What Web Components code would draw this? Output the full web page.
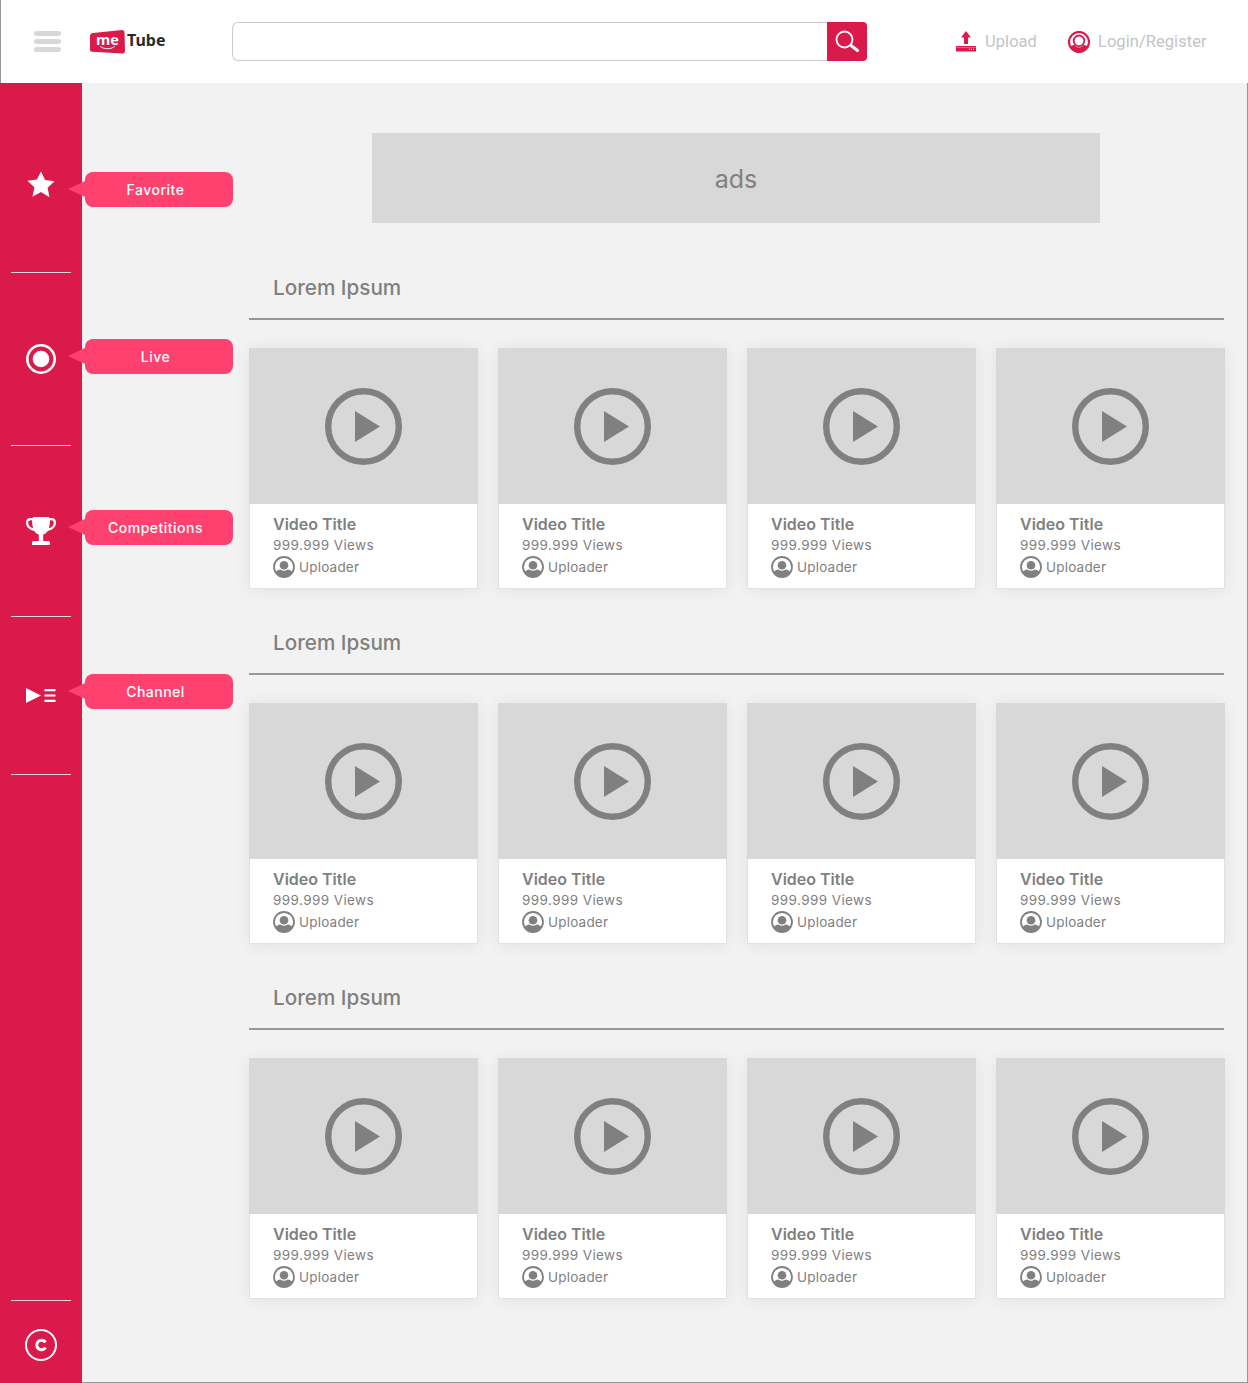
<!DOCTYPE html>
<html lang="en"><head><meta charset="utf-8"><title>meTube</title>
<style>html,body{margin:0;padding:0;background:#fff}body{font-family:Inter,"Liberation Sans",sans-serif}</style></head>
<body>
<me-app></me-app>
<script>
const def=(n,css,html)=>{customElements.define(n,class extends HTMLElement{
  connectedCallback(){ if(this.shadowRoot) return; const r=this.attachShadow({mode:'open'});
    const at=k=>this.getAttribute(k)||'';
    r.innerHTML=`<style>${css}</style>`+(typeof html==='function'?html(at):html); }
});};
const ICON={
 star:`<svg width="28" height="28" viewBox="0 0 28 28"><path fill="#fff" d="M14 .5l4.100 8.600 9.500 1.200-7 6.500 1.900 9.400L14 21l-8.500 4.700 1.900-9.400-7-6.500 9.500-1.200z"/></svg>`,
 live:`<svg width="30" height="30" viewBox="0 0 30 30"><circle cx="15" cy="15" r="13.700" fill="none" stroke="#fff" stroke-width="2.600"/><circle cx="15" cy="15" r="8.300" fill="#fff"/></svg>`,
 trophy:`<svg width="30" height="28" viewBox="0 0 30 28"><path fill="#fff" d="M7 0h16v1h2.500c3 0 4.500 2 4.500 4.800 0 4.200-3.500 7.400-8 8-1.200 2-3 3.300-4.800 3.800V24h5c1 0 1.800.6 1.800 1.600V28H6v-2.400c0-1 .8-1.600 1.800-1.600h5v-6.400c-1.800-.5-3.600-1.800-4.800-3.800-4.500-.6-8-3.800-8-8C0 3 1.500 1 4.500 1H7zM4.800 3.200C3 3.200 2.200 4.300 2.200 5.800c0 2.500 2 4.700 5 5.500C6.400 9 6 6 6.100 3.200zm20.400 0h-1.300c.1 2.800-.3 5.800-1.100 8.100 3-.8 5-3 5-5.500 0-1.500-.8-2.600-2.600-2.600z"/></svg>`,
 channel:`<svg width="30" height="15" viewBox="0 0 30 15"><path fill="#fff" d="M0 0l15 7.500L0 15z"/><path fill="#fff" d="M18.500 1h11v2.200h-11zM18.500 6.400h11v2.200h-11zM18.500 11.800h11V14h-11z"/></svg>`,
 copy:`<svg width="32" height="32" viewBox="0 0 32 32"><circle cx="16" cy="16" r="15" fill="none" stroke="#fff" stroke-width="2"/><path fill="none" stroke="#fff" stroke-width="3" d="M20.500 13.300a4.800 4.800 0 1 0 0 5.400"/></svg>`,
 play:`<svg width="77" height="77" viewBox="0 0 77 77"><circle cx="38.500" cy="38.500" r="35.300" fill="none" stroke="#808080" stroke-width="6.400"/><path fill="#808080" d="M30 23l25 15.500L30 54z"/></svg>`,
 user:`<svg width="22" height="22" viewBox="0 0 22 22"><defs><clipPath id="c"><circle cx="11" cy="11" r="9.800"/></clipPath></defs><circle cx="11" cy="11" r="10" fill="none" stroke="#808080" stroke-width="1.800"/><circle cx="11" cy="9.300" r="4.300" fill="#808080"/><path clip-path="url(#c)" fill="#808080" d="M2 22v-4.500c1-3 3.500-4 5.500-4 1 .8 2.200 1.200 3.500 1.200s2.500-.4 3.500-1.200c2 0 4.500 1 5.500 4V22z"/></svg>`,
 login:`<svg width="22" height="22" viewBox="0 0 22 22"><defs><clipPath id="d"><circle cx="11" cy="11" r="9.500"/></clipPath></defs><circle cx="11" cy="11" r="10" fill="none" stroke="#db1a4c" stroke-width="2.200"/><circle cx="11" cy="9.800" r="5.300" fill="none" stroke="#db1a4c" stroke-width="1.800"/><path clip-path="url(#d)" fill="#db1a4c" d="M2 22v-6c1.500-1.500 3-2 4.500-2 1 1.600 2.700 2.400 4.500 2.400s3.500-.8 4.500-2.400c1.500 0 3 .5 4.500 2v6z"/></svg>`,
 upload:`<svg width="20" height="21" viewBox="0 0 20 21"><path fill="#db1a4c" d="M10 0l5 6.500h-3V13H8V6.500H5zM0 15h20v5.500H0z"/><path fill="#fff" d="M0 16.200h20v.6H0z" opacity=".5"/><path fill="#fff" d="M13 17.800h1v1h-1zM15 17.800h1v1h-1zM17 17.800h1v1h-1z"/></svg>`,
 search:`<svg width="26" height="26" viewBox="0 0 26 26"><circle cx="10.500" cy="10.500" r="8" fill="none" stroke="#fff" stroke-width="1.800"/><path stroke="#fff" stroke-width="3" stroke-linecap="round" d="M17 16.500l6.500 5"/></svg>`
};
def('me-logo',`:host{display:flex;align-items:center;width:76px}
 .b{position:relative;width:35px;height:24px;flex:none}
 .b svg{position:absolute;inset:0}
 .m{position:absolute;left:0;right:0;top:2px;text-align:center;color:#fff;font:700 14.500px/15px "Open Sans",sans-serif}
 .t{margin:0 0 3px 2px;font:700 16px/22px "Noto Sans",sans-serif;color:#2b2b2b}`,
 ()=>`<div class="b"><svg width="35" height="24" viewBox="0 0 35 24"><path fill="#db1a4c" d="M3 3L32 0c1.600 0 2.500 1 2.500 2.500L35 21c0 1.500-1 2.500-2.500 2.400L2 21.800C.8 21.700 0 21 0 19.500V6c0-1.800 1.200-2.800 3-3z"/><path fill="none" stroke="#fff" stroke-width="1" stroke-linecap="round" d="M10.500 16.500c3 3 11 3 14 0"/></svg><span class="m">me</span></div><span class="t">Tube</span>`);
def('me-search',`:host{display:flex;width:635px;height:39px;box-sizing:border-box}
 .i{flex:1;border:1px solid #ccc;border-right:0;border-radius:6px 0 0 6px;background:#fff}
 .s{width:40px;background:#db1a4c;border-radius:0 4px 4px 0;display:flex;align-items:center;justify-content:center}`,
 ()=>`<div class="i"></div><div class="s">${ICON.search}</div>`);
def('me-action',`:host{display:flex;align-items:center;color:#c4c4c4;font:400 16.500px/22px Roboto,sans-serif;letter-spacing:.05px}
 .g{display:flex;margin-right:var(--g,9px)}`,
 at=>`<span class="g">${ICON[at('icon')]}</span><slot></slot>`);
def('me-header',`:host{display:flex;align-items:center;height:83px;box-sizing:border-box;border-left:1px solid #979797;background:#fff;padding-left:33px}
 .h{display:flex;flex-direction:column;gap:3px;width:27px;margin-right:29px}
 .h i{display:block;height:5px;border-radius:3px;background:#d8d8d8}
 me-search{margin-left:66px}
 me-action.u{margin-left:89px}
 me-action.l{margin-left:31px;--g:8px}`,
 ()=>`<div class="h"><i></i><i></i><i></i></div><me-logo></me-logo><me-search></me-search><me-action class="u" icon="upload">Upload</me-action><me-action class="l" icon="login">Login/Register</me-action>`);
def('side-item',`:host{display:block;position:relative;box-sizing:border-box;height:var(--h);padding-top:var(--p)}
 .ic{display:flex;justify-content:center;line-height:0}
 .tip{position:absolute;z-index:2;left:85px;top:var(--t);box-sizing:border-box;width:148px;height:35px;padding-right:7px;border-radius:8px;background:#ff4170;color:#fff;font:500 14px/35px Inter,sans-serif;text-align:center;letter-spacing:.5px}
 .tip::before{content:"";position:absolute;left:-17px;top:9px;border:8.500px solid transparent;border-left:0;border-right:17px solid #ff4170}
 .d{position:absolute;left:11px;width:60px;height:1px;background:#f3d4dc;bottom:0}`,
 at=>`<div class="ic">${ICON[at('icon')]}</div>${at('label')?`<div class="tip">${at('label')}</div>`:''}${at('line')?'<div class="d"></div>':''}`);
def('me-sidebar',`:host{display:flex;flex-direction:column;width:82px;background:#db1a4c;flex:none}
 .sp{flex:1}
 .rule{width:60px;height:1px;background:#f3d4dc;margin-left:11px}
 .c{display:flex;justify-content:center;margin:28px 0 22px}`,
 ()=>`
 <side-item icon="star" line="1" label="Favorite" style="--h:190px;--p:88px;--t:89px"></side-item>
 <side-item icon="live" line="1" label="Live" style="--h:173px;--p:71px;--t:66px"></side-item>
 <side-item icon="trophy" line="1" label="Competitions" style="--h:171px;--p:71px;--t:64px"></side-item>
 <side-item icon="channel" line="1" label="Channel" style="--h:158px;--p:71px;--t:57px"></side-item>
 <div class="sp"></div><div class="rule"></div><div class="c">${ICON.copy}</div>`);
def('video-card',`:host{display:block;width:229px;height:241px;background:#fff;box-shadow:0 1px 16px rgba(0,0,0,.07);color:#808080}
 .t{height:156px;background:#d8d8d8;display:flex;align-items:center;justify-content:center}
 .b{box-sizing:border-box;height:85px;border:1px solid #e2e2e2;border-top:0;padding:10px 0 0 23px}
 .n{font:600 16px/20px Inter,sans-serif}
 .v{font:400 13.500px/18px Inter,sans-serif;letter-spacing:.4px;margin-top:2px}
 .u{display:flex;align-items:center;font:400 13.500px/22px Inter,sans-serif;letter-spacing:.2px;margin-top:2px}
 .u svg{margin-right:4px}`,
 ()=>`<div class="t">${ICON.play}</div><div class="b"><div class="n">Video Title</div><div class="v">999.999 Views</div><div class="u">${ICON.user}Uploader</div></div>`);
def('video-section',`:host{display:block;margin-left:167px;width:975px;height:355px}
 .h{box-sizing:border-box;height:52px;padding:0 0 0 24px;border-bottom:2px solid #979797;color:#808080;font:500 20.700px/39px Inter,sans-serif}
 .g{display:grid;grid-template-columns:repeat(4,229px);gap:20px;margin-top:28px}`,
 at=>`<div class="h">${at('heading')}</div><div class="g"><video-card></video-card><video-card></video-card><video-card></video-card><video-card></video-card></div>`);
def('me-main',`:host{display:block;flex:1;box-sizing:border-box;background:#f2f2f2;border-right:1px solid #979797;border-bottom:1px solid #979797;padding-top:50px}
 .ads{margin-left:290px;width:728px;height:90px;background:#d8d8d8;color:#808080;font:400 25px/93px Inter,sans-serif;text-align:center;margin-bottom:45px}`,
 ()=>`<div class="ads">ads</div><video-section heading="Lorem Ipsum"></video-section><video-section heading="Lorem Ipsum"></video-section><video-section heading="Lorem Ipsum"></video-section>`);
def('me-app',`:host{display:block;width:1248px;height:1383px;overflow:hidden}
 .r{display:flex;height:1300px}`,
 ()=>`<me-header></me-header><div class="r"><me-sidebar></me-sidebar><me-main></me-main></div>`);
</script>
</body></html>
